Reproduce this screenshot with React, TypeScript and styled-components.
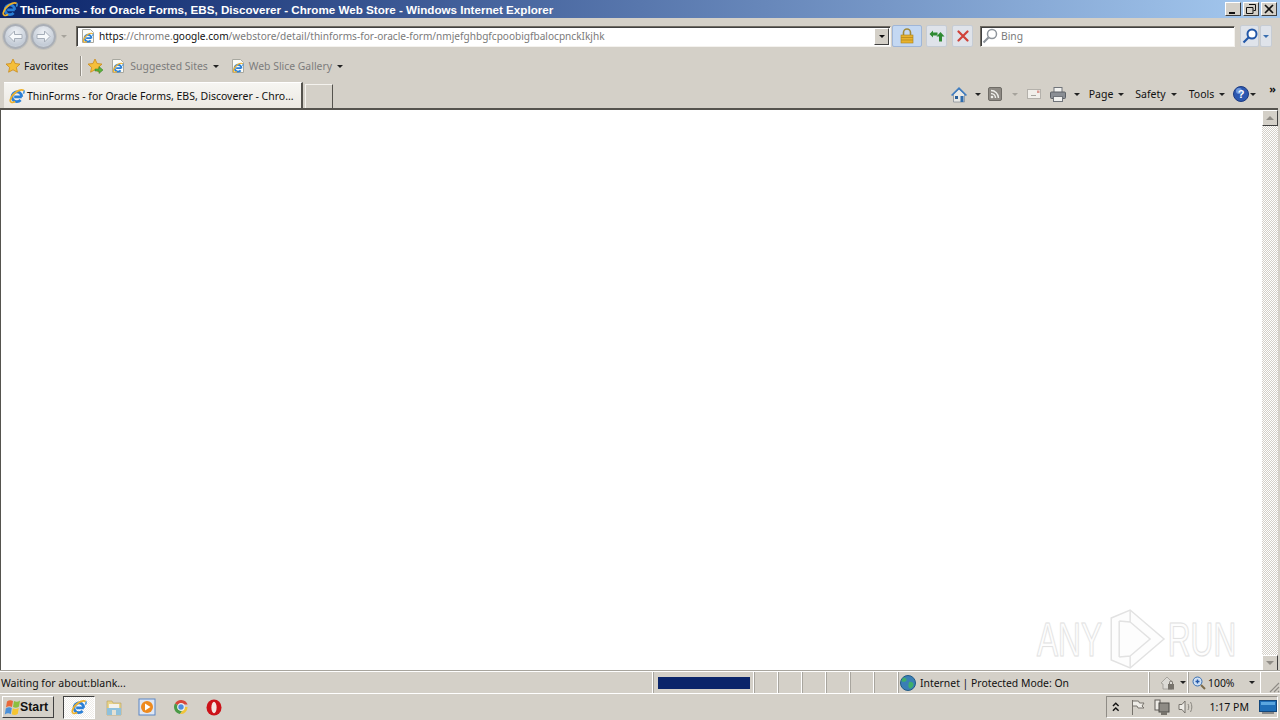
import styled, { createGlobalStyle } from "styled-components";

const GlobalStyle = createGlobalStyle`
    html, body {
        margin: 0;
        padding: 0;
        width: 1280px;
        height: 720px;
        overflow: hidden;
        background: #d4d0c8;
        font-family: "Noto Sans", "Liberation Sans", sans-serif;
    }
`;

const Page = styled.div`
    position: relative;
    display: flex;
    flex-direction: column;
    width: 1280px;
    height: 720px;
    overflow: hidden;
    background: #d4d0c8;
    color: #111;
    font-size: 11px;
`;

/* title bar */
const TitleBar = styled.div`
    display: flex;
    align-items: center;
    height: 18px;
    padding: 0 2px;
    flex-shrink: 0;
    background: linear-gradient(90deg, #0a246a 0%, #a6caf0 100%);
`;

const TitleText = styled.div`
    flex: 1;
    margin-left: 2px;
    color: #fff;
    font-family: "Liberation Sans", sans-serif;
    font-size: 11.63px;
    font-weight: 700;
    white-space: nowrap;
`;

const WindowButtons = styled.div`
    display: flex;
    align-items: center;
    gap: 2px;
    margin-right: 1px;
`;

const WindowButton = styled.div`
    display: flex;
    align-items: center;
    justify-content: center;
    width: 16px;
    height: 14px;
    background: #d4d0c8;
    border: 1px solid;
    border-color: #fff #404040 #404040 #fff;
    box-sizing: border-box;
`;

/* address row */
const AddressRow = styled.div`
    display: flex;
    align-items: center;
    height: 36px;
    flex-shrink: 0;
    padding-left: 3px;
`;

const NavButton = styled.div`
    display: flex;
    align-items: center;
    justify-content: center;
    width: 25px;
    height: 25px;
    margin-right: 3px;
    border-radius: 50%;
    box-sizing: border-box;
    border: 2px solid #a9aeb6;
    background: radial-gradient(circle at 50% 30%, #eef1f5, #c3cbd6 70%, #d7dde5);
    box-shadow: 0 0 0 1px #c4c2bc;
`;

const SmallCaret = styled.div<{ $color?: string; $left?: number; $right?: number }>`
    width: 0;
    height: 0;
    flex-shrink: 0;
    margin-left: ${(p) => p.$left ?? 0}px;
    margin-right: ${(p) => p.$right ?? 0}px;
    border-left: 3px solid transparent;
    border-right: 3px solid transparent;
    border-top: 3px solid ${(p) => p.$color ?? "#222"};
`;

const InsetField = styled.div<{ $width: number; $left?: number }>`
    display: flex;
    align-items: center;
    width: ${(p) => p.$width}px;
    height: 21px;
    margin-left: ${(p) => p.$left ?? 0}px;
    box-sizing: border-box;
    flex-shrink: 0;
    background: #fff;
    border: 1px solid;
    border-color: #6e6a62 #f4f2ee #f4f2ee #6e6a62;
    box-shadow: inset 1px 1px 0 #404040;
`;

const UrlText = styled.div`
    flex: 1;
    margin-left: 3px;
    color: #7a7a7a;
    font-size: 10.08px;
    white-space: nowrap;
    overflow: hidden;
`;

const UrlStrong = styled.span`
    color: #111;
`;

const ComboArrow = styled.div`
    display: flex;
    align-items: center;
    justify-content: center;
    width: 15px;
    height: 17px;
    margin-right: 1px;
    box-sizing: border-box;
    background: #d4d0c8;
    border: 1px solid;
    border-color: #fff #404040 #404040 #fff;
`;

const ToolSquare = styled.div<{ $width: number; $left: number; $active?: boolean }>`
    display: flex;
    align-items: center;
    justify-content: center;
    flex-shrink: 0;
    width: ${(p) => p.$width}px;
    height: 22px;
    margin-left: ${(p) => p.$left}px;
    box-sizing: border-box;
    border-radius: 2px;
    border: 1px solid ${(p) => (p.$active ? "#9fb6d8" : "#c6ccd4")};
    background: ${(p) => (p.$active ? "#c4d8f2" : "#dfe3ea")};
`;

const BingText = styled.div`
    margin-left: 3px;
    color: #7a7a7a;
    font-size: 10.3px;
`;

/* favourites row */
const FavRow = styled.div`
    display: flex;
    align-items: center;
    height: 27px;
    padding: 0 0 3px 5px;
    box-sizing: border-box;
    flex-shrink: 0;
`;

const FavLabel = styled.div<{ $left: number; $muted?: boolean }>`
    margin-left: ${(p) => p.$left}px;
    color: ${(p) => (p.$muted ? "#7c7c7c" : "#111")};
    font-size: 10.4px;
    white-space: nowrap;
`;

const FavDivider = styled.div`
    width: 1px;
    height: 20px;
    margin: 0 6px 0 12px;
    background: #918d85;
    box-shadow: 1px 0 0 #f4f2ee;
`;

const IconGap = styled.div<{ $left: number }>`
    display: flex;
    flex-shrink: 0;
    margin-left: ${(p) => p.$left}px;
`;

/* tab row */
const TabRow = styled.div`
    display: flex;
    align-items: flex-end;
    height: 27px;
    padding-left: 4px;
    box-sizing: border-box;
    flex-shrink: 0;
`;

const ActiveTab = styled.div`
    display: flex;
    align-items: center;
    width: 299px;
    height: 26px;
    padding-left: 5px;
    box-sizing: border-box;
    background: linear-gradient(#f6f5f2, #ece9e3);
    border-right: 2px solid #55534e;
    border-top: 1px solid #fff;
`;

const TabTitle = styled.div`
    margin-left: 2px;
    font-size: 10.5px;
    white-space: nowrap;
`;

const NewTab = styled.div`
    width: 28px;
    height: 24px;
    margin-left: 2px;
    box-sizing: border-box;
    border: 1px solid #f4f2ee;
    border-right: 1px solid #55534e;
    border-bottom: none;
`;

const CommandBar = styled.div`
    flex: 1;
    display: flex;
    align-items: center;
    justify-content: flex-end;
    height: 26px;
    padding: 0 4px 2px 0;
    box-sizing: border-box;
`;

const CommandLabel = styled.div<{ $left: number }>`
    margin-left: ${(p) => p.$left}px;
    margin-right: 5px;
    font-size: 10.5px;
`;

const Chevrons = styled.div`
    margin: -11px 0 0 13px;
    font-size: 11px;
    font-weight: 700;
    line-height: 11px;
`;

/* page area */
const Viewport = styled.div`
    flex: 1;
    display: flex;
    justify-content: flex-end;
    min-height: 0;
    margin-right: 2px;
    background: #fff;
    border-top: 2px solid #55534e;
    border-left: 1px solid #55534e;
`;

const Scrollbar = styled.div`
    display: flex;
    flex-direction: column;
    justify-content: space-between;
    width: 16px;
    background-color: #e8e6e1;
    background-image: repeating-conic-gradient(#d4d0c8 0 25%, #fff 0 50%);
    background-size: 2px 2px;
`;

const ScrollButton = styled.div`
    display: flex;
    align-items: center;
    justify-content: center;
    height: 16px;
    box-sizing: border-box;
    background: #d4d0c8;
    border: 1px solid;
    border-color: #fff #404040 #404040 #fff;
`;

const ScrollUp = styled.div`
    width: 0;
    height: 0;
    border-left: 4px solid transparent;
    border-right: 4px solid transparent;
    border-bottom: 4px solid #8f8c86;
`;

const ScrollDown = styled.div`
    width: 0;
    height: 0;
    border-left: 4px solid transparent;
    border-right: 4px solid transparent;
    border-top: 4px solid #8f8c86;
`;

const Watermark = styled.div`
    position: absolute;
    left: 1037px;
    top: 608px;
    display: flex;
    align-items: center;
    height: 62px;
    color: #fdfdfd;
    font-family: "Liberation Sans", sans-serif;
    font-size: 49px;
    -webkit-text-stroke: 1px #e2e2e2;
    text-shadow: 0 0 2px #e6e6e6;
    transform: scaleX(0.645);
    transform-origin: left center;
`;

const WatermarkMark = styled.div`
    display: flex;
    margin: 0 3px 0 11px;
`;

/* status bar */
const StatusBar = styled.div`
    display: flex;
    height: 23px;
    box-sizing: border-box;
    flex-shrink: 0;
    border-top: 1px solid #fff;
    border-bottom: 1px solid #fff;
    box-shadow: 0 -1px 0 #a8a59e;
`;

const StatusCell = styled.div<{ $width: number; $pad?: number; $first?: boolean }>`
    display: flex;
    align-items: center;
    width: ${(p) => p.$width}px;
    padding-left: ${(p) => p.$pad ?? 0}px;
    flex-shrink: 0;
    box-sizing: border-box;
    border-right: 1px solid #fff;
    border-left: ${(p) => (p.$first ? "none" : "1px solid #a8a59e")};
    font-size: 10.5px;
    white-space: nowrap;
`;

const ProgressTrack = styled.div`
    width: 92px;
    height: 12px;
    margin-left: 3px;
    background: #0a246a;
`;

const Grip = styled.div`
    flex: 1;
    display: flex;
    align-items: flex-end;
    justify-content: flex-end;
`;

/* taskbar */
const Taskbar = styled.div`
    display: flex;
    align-items: center;
    height: 26px;
    flex-shrink: 0;
    padding-left: 2px;
    background: #d4d0c8;
`;

const StartButton = styled.div`
    display: flex;
    align-items: center;
    width: 52px;
    height: 22px;
    padding-left: 1px;
    box-sizing: border-box;
    border: 1px solid;
    border-color: #fff #404040 #404040 #fff;
    font-family: "Liberation Sans", sans-serif;
    font-size: 12.3px;
    font-weight: 700;
`;

const StartLabel = styled.div`
    margin-left: -2px;
`;

const PressedApp = styled.div`
    display: flex;
    align-items: center;
    justify-content: center;
    width: 32px;
    height: 23px;
    margin-left: 9px;
    box-sizing: border-box;
    border: 1px solid;
    border-color: #404040 #fff #fff #404040;
    background-color: #fff;
    background-image: repeating-conic-gradient(#eeece8 0 25%, #fff 0 50%);
    background-size: 2px 2px;
`;

const TrayGroup = styled.div`
    display: flex;
    align-items: center;
    width: 172px;
    height: 22px;
    margin-left: auto;
    margin-right: 2px;
    box-sizing: border-box;
    padding-left: 5px;
    border: 1px solid;
    border-color: #8f8c86 #fff #fff #8f8c86;
`;

const Clock = styled.div`
    margin-left: 16px;
    font-size: 10.5px;
    white-space: nowrap;
`;

const IeGlyph = () => (
    <>
        <path d="M12.800 8.800H5.200M12.800 8.800A4.900 4.900 0 1 0 11.600 12" fill="none" stroke="#2a7fd6" strokeWidth="2.700" />
        <path d="M14.800 2.400C11 .2 3.500 5 1.400 11.400 .6 14.400 3 15.400 6.200 13.600" fill="none" stroke="#eeb02a" strokeWidth="1.700" />
        <path d="M14.800 2.400C15.400 3.400 15 4.600 14.400 5.600" fill="none" stroke="#3f93dc" strokeWidth="1.500" />
    </>
);

const IeLogo = ({ size = 16 }: { size?: number }) => (
    <svg width={size} height={size} viewBox="0 0 16 16">
        <IeGlyph />
    </svg>
);

const PageIcon = () => (
    <svg width="16" height="16" viewBox="0 0 16 16">
        <path d="M2.500 1.500h8l3 3v10h-11z" fill="#fbfbf6" stroke="#a8a8a0" />
        <g transform="translate(2.500 4) scale(.7)">
            <IeGlyph />
        </g>
    </svg>
);

const Star = ({ plus }: { plus?: boolean }) => (
    <svg width="16" height="16" viewBox="0 0 16 16">
        <path d="M8 1l2.100 4.500 4.900.6-3.600 3.300 1 4.800L8 11.800 3.600 14.200l1-4.800L1 6.100l4.900-.6z" fill="#f5bf3a" stroke="#c98a1c" strokeWidth=".8" />
        {plus && <path d="M8 11h4V8.500l4 3.500-4 3.500V13H8z" fill="#5cb23c" stroke="#2f7d22" strokeWidth=".5" />}
    </svg>
);

const BackArrow = ({ flip }: { flip?: boolean }) => (
    <svg width="15" height="13" viewBox="0 0 15 13" style={{ transform: flip ? "scaleX(-1)" : undefined }}>
        <path d="M1 6.500L6.500 1v3.500H14v4H6.500V12z" fill="#f7f9fb" stroke="#a6aeb9" />
    </svg>
);

const Lock = () => (
    <svg width="14" height="16" viewBox="0 0 14 16">
        <path d="M3.500 7V4.500a3.500 3.500 0 017 0V7" fill="none" stroke="#a08a3a" strokeWidth="1.600" />
        <rect x="1" y="7" width="12" height="8" fill="#e8b22e" stroke="#a9801a" strokeWidth=".6" />
        <path d="M1 9.500h12M1 12h12" stroke="#b58a1e" strokeWidth=".8" />
    </svg>
);

const RefreshIcon = () => (
    <svg width="16" height="14" viewBox="0 0 16 14">
        <path d="M.5 5L4 1.500v2h4.500v3H4v2z" fill="#2f8a32" />
        <path d="M11.500 3L15.500 7.500H13V12.500H10V7.500H7.500z" fill="#2f8a32" />
    </svg>
);

const StopIcon = () => (
    <svg width="12" height="12" viewBox="0 0 12 12">
        <path d="M1.500 1.500l9 9M10.500 1.500l-9 9" stroke="#d0423a" strokeWidth="2.200" strokeLinecap="round" />
    </svg>
);

const Magnifier = ({ color, width = 1.500 }: { color: string; width?: number }) => (
    <svg width="16" height="16" viewBox="0 0 16 16">
        <circle cx="10" cy="6" r="4.500" fill="#fff" stroke={color} strokeWidth={width} />
        <path d="M6.500 9.500L1.500 14.500" stroke={color} strokeWidth="2.200" />
    </svg>
);

const HomeIcon = () => (
    <svg width="16" height="17" viewBox="0 0 16 17">
        <path d="M2.500 8v8h11V8L8 3z" fill="#e9e9e6" stroke="#7e8690" strokeWidth=".7" />
        <path d="M0 9l8-8 8 8-1.200 1L8 3.500 1.200 10z" fill="#3f7cc0" />
        <rect x="9.500" y="10" width="3" height="6" fill="#2f6cad" />
        <rect x="4" y="10" width="3" height="3" fill="#2a5f99" />
    </svg>
);

const RssIcon = () => (
    <svg width="14" height="14" viewBox="0 0 14 14">
        <rect x=".5" y=".5" width="13" height="13" rx="1.500" fill="#8e8a84" stroke="#6f6c66" />
        <circle cx="4" cy="10" r="1.300" fill="#eeeeea" />
        <path d="M3 6.500a4.500 4.500 0 014.500 4.500M3 3.500A7.500 7.500 0 0110.500 11" fill="none" stroke="#eeeeea" strokeWidth="1.400" />
    </svg>
);

const MailIcon = () => (
    <svg width="14" height="10" viewBox="0 0 14 10">
        <rect x=".5" y=".5" width="13" height="9" fill="#f1efea" stroke="#b4b1ab" />
        <rect x="10" y="1.500" width="2.500" height="2.500" fill="#d99a92" />
        <path d="M4 6.500h5" stroke="#a8a6a0" />
    </svg>
);

const PrintIcon = () => (
    <svg width="16" height="15" viewBox="0 0 16 15">
        <rect x="4" y=".5" width="8" height="5" fill="#f2f2f0" stroke="#70747a" />
        <rect x=".5" y="5" width="15" height="6.500" rx="1" fill="#8a8e94" stroke="#5c6066" />
        <rect x="3.500" y="9.500" width="9" height="5" fill="#f2f2f0" stroke="#70747a" />
    </svg>
);

const HelpIcon = () => (
    <svg width="16" height="16" viewBox="0 0 16 16">
        <circle cx="8" cy="8" r="7.500" fill="#2c58b0" stroke="#1c3a80" />
        <circle cx="6" cy="5" r="3" fill="#6f97dc" />
        <text x="8" y="12" textAnchor="middle" fontSize="11" fontWeight="700" fill="#fff" fontFamily="Liberation Sans">?</text>
    </svg>
);

const GlobeIcon = () => (
    <svg width="16" height="16" viewBox="0 0 16 16">
        <circle cx="8" cy="8" r="7.500" fill="#3a7fb5" stroke="#1f5a86" />
        <path d="M4 2.500c2 .5 3 1.500 2.500 3S3 7 2 6.500 2.500 3 4 2.500zM9 7c2-.5 4 .5 4.500 2s-1.500 4-3 4.500S8 11 8.500 9.500z" fill="#3fae6a" />
    </svg>
);

const LockedHome = () => (
    <svg width="16" height="16" viewBox="0 0 16 16">
        <path d="M1 8l6-6 6 6-1 1v5H3V9z" fill="#dcdad5" stroke="#9a9892" strokeWidth=".8" />
        <rect x="8" y="9" width="6" height="5.500" fill="#77736c" />
        <path d="M9.500 9V7.500a1.500 1.500 0 013 0V9" fill="none" stroke="#77736c" />
    </svg>
);

const ZoomIcon = () => (
    <svg width="14" height="14" viewBox="0 0 14 14">
        <circle cx="5.500" cy="5.500" r="4.500" fill="#cfe0f4" stroke="#3a6fb0" />
        <path d="M3.500 5.500h4M5.500 3.500v4" stroke="#2257a8" strokeWidth="1.400" />
        <path d="M9 9l4 4" stroke="#7b6a4a" strokeWidth="2" />
    </svg>
);

const GripIcon = () => (
    <svg width="12" height="12" viewBox="0 0 12 12">
        <path d="M11 2L2 11M11 6l-5 5M11 10l-1 1" stroke="#8f8c86" strokeWidth="1.200" />
    </svg>
);

const WinFlag = () => (
    <svg width="18" height="17" viewBox="0 0 18 17">
        <path d="M3 2.500c2-1.500 4-1.500 6-.5L8 8C6 7 4 7 2 8.500z" fill="#e8683a" />
        <path d="M10 2c2 1 4 1 6-.5l-1 6c-2 1.500-4 1.500-6 .5z" fill="#8cbf3f" />
        <path d="M1.800 9.500C4 8 6 8 7.800 9l-1 6c-2-1-4-1-6 .5z" fill="#4a90d9" />
        <path d="M8.800 9.300c2 1 4 1 6-.5l-1 6c-2 1.500-4 1.500-6 .5z" fill="#f5c531" />
    </svg>
);

const ExplorerIcon = () => (
    <svg width="16" height="17" viewBox="0 0 16 17">
        <path d="M1 2h5l1 2h8v12H1z" fill="#e9d48a" stroke="#b59d5a" strokeWidth=".6" />
        <path d="M3 5h10v4H3z" fill="#f4f2ec" />
        <path d="M1 9h14v7H1z" fill="#8fc1dc" />
        <rect x="6" y="11" width="4" height="5" fill="#e5e1d4" />
    </svg>
);

const MediaIcon = () => (
    <svg width="18" height="18" viewBox="0 0 18 18">
        <rect x="1" y="1" width="16" height="16" fill="#dfe7f4" stroke="#5b86c4" />
        <circle cx="9" cy="9" r="6" fill="#ee8a1e" />
        <path d="M7 5.500L12.500 9 7 12.500z" fill="#fff" />
    </svg>
);

const ChromeIcon = () => (
    <svg width="16" height="16" viewBox="0 0 16 16">
        <path d="M8 8L2 4.500A7 7 0 0114.600 5.500H8z" fill="#d8473a" />
        <path d="M8 8l-6-3.500A7 7 0 007 15l3.500-5z" fill="#4a9a46" />
        <path d="M8 8h6.600A7 7 0 017 15l3.500-5z" fill="#f0c53a" />
        <circle cx="8" cy="8" r="3.300" fill="#4d8de0" stroke="#f2f2f2" strokeWidth="1.200" />
    </svg>
);

const OperaIcon = () => (
    <svg width="16" height="17" viewBox="0 0 16 17">
        <ellipse cx="8" cy="8.500" rx="7.500" ry="8" fill="#cc1219" />
        <ellipse cx="8" cy="8.500" rx="2.600" ry="5.800" fill="#f4e6e2" />
    </svg>
);

const TrayChevron = () => (
    <svg width="8" height="10" viewBox="0 0 8 10">
        <path d="M1 4l3-3 3 3M1 9l3-3 3 3" fill="none" stroke="#111" strokeWidth="1.500" />
    </svg>
);

const FlagIcon = () => (
    <svg width="16" height="16" viewBox="0 0 16 16">
        <path d="M2.500 1v15M2.500 2h6l1 2h4.500l-2 3 2 2H8l-1-2H2.500" fill="#eeece7" stroke="#77736c" />
    </svg>
);

const NetworkIcon = () => (
    <svg width="16" height="17" viewBox="0 0 16 17">
        <rect x="1" y="1" width="5" height="10" fill="#eeece7" stroke="#605d58" />
        <rect x="5" y="4" width="10" height="9" fill="#8e8b85" stroke="#4e4c48" />
        <rect x="7" y="13" width="6" height="3" fill="#77736c" />
    </svg>
);

const SpeakerIcon = () => (
    <svg width="16" height="16" viewBox="0 0 16 16">
        <path d="M1 5.500h3l3-3.500v12l-3-3.500H1z" fill="#eeece7" stroke="#77736c" />
        <path d="M10 5c1 2 1 4 0 6M12.500 3c1.800 3 1.800 7 0 10" fill="none" stroke="#8a8780" />
    </svg>
);

const DesktopIcon = () => (
    <svg width="18" height="14" viewBox="0 0 18 14">
        <rect x=".5" y=".5" width="17" height="11" fill="#1f6fb8" stroke="#12477c" />
        <rect x="2" y="2" width="14" height="3" fill="#5aa6df" />
        <rect x="3" y="12" width="12" height="2" fill="#888" />
    </svg>
);

const RunMark = () => (
    <svg width="88" height="62" viewBox="0 0 57 62" preserveAspectRatio="none">
        <path d="M2 10L21 2 55 31 21 60 2 52z" fill="#fdfdfd" stroke="#e2e2e2" strokeWidth="1.500" />
        <path d="M10 13V49M21 2V14L41 31 21 48V60M10 13L21 14M10 49L21 48" fill="none" stroke="#e2e2e2" strokeWidth="1.500" />
    </svg>
);

export default function App() {
    return (
        <Page>
            <GlobalStyle />
            <TitleBar>
                <IeLogo />
                <TitleText>ThinForms - for Oracle Forms, EBS, Discoverer - Chrome Web Store - Windows Internet Explorer</TitleText>
                <WindowButtons>
                    <WindowButton>
                        <svg width="10" height="10" viewBox="0 0 10 10"><path d="M1 8h6v2H1z" fill="#111" /></svg>
                    </WindowButton>
                    <WindowButton>
                        <svg width="10" height="10" viewBox="0 0 10 10"><path d="M3 .5h6.500v6H7.500M.5 3.500h6.500v6H.5z" fill="none" stroke="#111" /></svg>
                    </WindowButton>
                    <WindowButton>
                        <svg width="10" height="10" viewBox="0 0 10 10"><path d="M1 1l8 8M9 1l-8 8" stroke="#111" strokeWidth="1.600" /></svg>
                    </WindowButton>
                </WindowButtons>
            </TitleBar>

            <AddressRow>
                <NavButton><BackArrow /></NavButton>
                <NavButton><BackArrow flip /></NavButton>
                <SmallCaret $color="#a6a39c" $left={2} $right={9} />
                <InsetField $width={815}>
                    <IconGap $left={3}><PageIcon /></IconGap>
                    <UrlText>
                        <UrlStrong>https</UrlStrong>://chrome.<UrlStrong>google.com</UrlStrong>/webstore/detail/thinforms-for-oracle-form/nmjefghbgfcpoobigfbalocpnckIkjhk
                    </UrlText>
                    <ComboArrow><SmallCaret $color="#111" /></ComboArrow>
                </InsetField>
                <ToolSquare $width={30} $left={1} $active><Lock /></ToolSquare>
                <ToolSquare $width={21} $left={4}><RefreshIcon /></ToolSquare>
                <ToolSquare $width={21} $left={5}><StopIcon /></ToolSquare>
                <InsetField $width={255} $left={7}>
                    <IconGap $left={1}><Magnifier color="#8e959c" /></IconGap>
                    <BingText>Bing</BingText>
                </InsetField>
                <ToolSquare $width={19} $left={5}><Magnifier color="#2257a8" width={2} /></ToolSquare>
                <ToolSquare $width={12} $left={1}><SmallCaret $color="#3a6fb0" /></ToolSquare>
            </AddressRow>

            <FavRow>
                <Star />
                <FavLabel $left={3}>Favorites</FavLabel>
                <FavDivider />
                <Star plus />
                <IconGap $left={7}><PageIcon /></IconGap>
                <FavLabel $left={4} $muted>Suggested Sites</FavLabel>
                <SmallCaret $left={5} />
                <IconGap $left={11}><PageIcon /></IconGap>
                <FavLabel $left={3} $muted>Web Slice Gallery</FavLabel>
                <SmallCaret $left={5} />
            </FavRow>

            <TabRow>
                <ActiveTab>
                    <IeLogo />
                    <TabTitle>ThinForms - for Oracle Forms, EBS, Discoverer - Chro...</TabTitle>
                </ActiveTab>
                <NewTab />
                <CommandBar>
                    <HomeIcon />
                    <SmallCaret $left={8} />
                    <IconGap $left={7}><RssIcon /></IconGap>
                    <SmallCaret $left={10} $color="#a6a39c" />
                    <IconGap $left={9}><MailIcon /></IconGap>
                    <IconGap $left={9}><PrintIcon /></IconGap>
                    <SmallCaret $left={8} />
                    <CommandLabel $left={9}>Page</CommandLabel>
                    <SmallCaret />
                    <CommandLabel $left={11}>Safety</CommandLabel>
                    <SmallCaret />
                    <CommandLabel $left={12}>Tools</CommandLabel>
                    <SmallCaret />
                    <IconGap $left={8}><HelpIcon /></IconGap>
                    <SmallCaret $left={1} />
                    <Chevrons>»</Chevrons>
                </CommandBar>
            </TabRow>

            <Viewport>
                <Scrollbar>
                    <ScrollButton><ScrollUp /></ScrollButton>
                    <ScrollButton><ScrollDown /></ScrollButton>
                </Scrollbar>
            </Viewport>

            <Watermark>
                ANY<WatermarkMark><RunMark /></WatermarkMark>RUN
            </Watermark>

            <StatusBar>
                <StatusCell $width={653} $pad={1} $first>Waiting for about:blank...</StatusCell>
                <StatusCell $width={101} $pad={1}><ProgressTrack /></StatusCell>
                <StatusCell $width={24} />
                <StatusCell $width={24} />
                <StatusCell $width={24} />
                <StatusCell $width={24} />
                <StatusCell $width={24} />
                <StatusCell $width={24} />
                <StatusCell $width={251} $pad={1}>
                    <GlobeIcon />
                    <FavLabel $left={4}>Internet | Protected Mode: On</FavLabel>
                </StatusCell>
                <StatusCell $width={39} $pad={10}>
                    <LockedHome />
                    <SmallCaret $left={4} />
                </StatusCell>
                <StatusCell $width={73} $pad={3}>
                    <ZoomIcon />
                    <FavLabel $left={2}>100%</FavLabel>
                    <SmallCaret $left={15} />
                </StatusCell>
                <Grip><GripIcon /></Grip>
            </StatusBar>

            <Taskbar>
                <StartButton>
                    <WinFlag />
                    <StartLabel>Start</StartLabel>
                </StartButton>
                <PressedApp><IeLogo /></PressedApp>
                <IconGap $left={11}><ExplorerIcon /></IconGap>
                <IconGap $left={16}><MediaIcon /></IconGap>
                <IconGap $left={17}><ChromeIcon /></IconGap>
                <IconGap $left={17}><OperaIcon /></IconGap>
                <TrayGroup>
                    <TrayChevron />
                    <IconGap $left={10}><FlagIcon /></IconGap>
                    <IconGap $left={8}><NetworkIcon /></IconGap>
                    <IconGap $left={8}><SpeakerIcon /></IconGap>
                    <Clock>1:17 PM</Clock>
                    <IconGap $left={10}><DesktopIcon /></IconGap>
                </TrayGroup>
            </Taskbar>
        </Page>
    );
}
